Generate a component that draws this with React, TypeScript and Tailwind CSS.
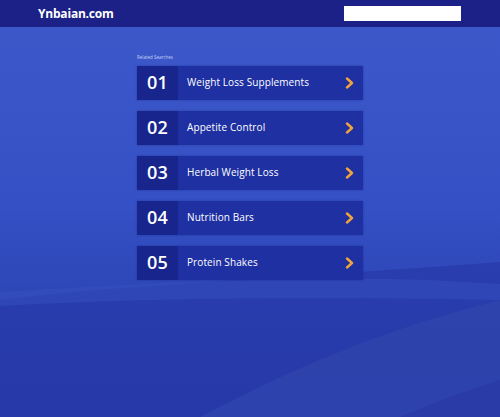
const items = [
  { n: "01", label: "Weight Loss Supplements" },
  { n: "02", label: "Appetite Control" },
  { n: "03", label: "Herbal Weight Loss" },
  { n: "04", label: "Nutrition Bars" },
  { n: "05", label: "Protein Shakes" },
];

function Chevron() {
  return (
    <svg width="9" height="12" viewBox="0 0 9 12" fill="none">
      <path d="M2 1.5 L7 6 L2 10.5" stroke="#f0a43a" strokeWidth="2.4" strokeLinecap="round" strokeLinejoin="round" />
    </svg>
  );
}

export default function App() {
  return (
    <div
      className="relative w-[500px] h-[417px] overflow-hidden bg-gradient-to-b from-[#3d59ca] via-[#3450c4] to-[#2538a6]"
      style={{ fontFamily: '"Open Sans", "DejaVu Sans", sans-serif' }}
    >
      {/* backdrop landscape */}
      <svg className="absolute inset-0" width="500" height="417" viewBox="0 0 500 417">
        <path d="M0 300 C120 285 260 280 500 262 L500 417 L0 417 Z" fill="#2839a8" opacity="0.7" />
        <path d="M0 292 C150 283 300 276 430 280 L500 284 L500 300 C300 296 150 298 0 306 Z" fill="#3a56c4" opacity="0.4" />
        <path d="M200 417 C290 370 380 330 500 300 L500 417 Z" fill="#3045ad" opacity="0.8" />
        <path d="M400 417 C440 400 470 390 500 380 L500 417 Z" fill="#2a3ba8" />
      </svg>

      <header className="relative h-[27px] bg-[#1c2188] flex items-center justify-between pl-[38px] pr-[39px]">
        <span className="text-white font-bold text-[12px] tracking-[-0.2px]">Ynbaian.com</span>
        <div className="w-[117px] h-[15px] bg-white" />
      </header>

      <main className="relative w-[226px] ml-[137px] pt-[28px]">
        <p className="text-[4.5px] text-[#c7d2f5] mb-[6px] leading-none">Related Searches</p>
        <ul className="flex flex-col gap-[11px]">
          {items.map((it) => (
            <li key={it.n} className="flex h-[34px] bg-[#1e30a2] shadow-[0_0_2px_rgba(20,30,120,0.4)]">
              <div className="w-[41px] bg-[#18258d] flex items-center justify-center text-white font-semibold text-[18px] tracking-[0.3px]">
                {it.n}
              </div>
              <div className="flex-1 flex items-center justify-between pl-[9px] pr-[9px]">
                <span className="text-white text-[10px] font-medium tracking-[0.1px]">{it.label}</span>
                <Chevron />
              </div>
            </li>
          ))}
        </ul>
      </main>
    </div>
  );
}
